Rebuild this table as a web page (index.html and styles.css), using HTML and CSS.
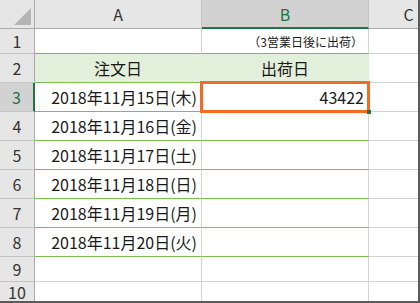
FILE: index.html
```html
<!DOCTYPE html>
<html lang="ja">
<head>
    <meta charset="UTF-8">
    <title>出荷日</title>
    <link rel="stylesheet" href="styles.css">
</head>
<body>
    <div class="sheet">
        <div class="grid">
            <!-- column headers -->
            <div class="corner"><span class="tri"></span></div>
            <div class="colhead">A</div>
            <div class="colhead sel">B</div>
            <div class="colhead">C</div>

            <div class="rowhead">1</div>
            <div class="cell gline"></div>
            <div class="cell gline note">（3営業日後に出荷）</div>
            <div class="cell"></div>

            <div class="rowhead">2</div>
            <div class="cell gline title fill">注文日</div>
            <div class="cell gline title fill">出荷日</div>
            <div class="cell"></div>

            <div class="rowhead sel">3</div>
            <div class="cell gline date">2018年11月15日(木)</div>
            <div class="cell gline date active">43422<span class="mark"></span><span class="handle"></span></div>
            <div class="cell"></div>

            <div class="rowhead">4</div>
            <div class="cell gline date">2018年11月16日(金)</div>
            <div class="cell gline"></div>
            <div class="cell"></div>

            <div class="rowhead">5</div>
            <div class="cell gline date">2018年11月17日(土)</div>
            <div class="cell gline"></div>
            <div class="cell"></div>

            <div class="rowhead">6</div>
            <div class="cell gline date">2018年11月18日(日)</div>
            <div class="cell gline"></div>
            <div class="cell"></div>

            <div class="rowhead">7</div>
            <div class="cell gline date">2018年11月19日(月)</div>
            <div class="cell gline"></div>
            <div class="cell"></div>

            <div class="rowhead">8</div>
            <div class="cell gline date">2018年11月20日(火)</div>
            <div class="cell gline"></div>
            <div class="cell"></div>

            <div class="rowhead">9</div>
            <div class="cell"></div>
            <div class="cell"></div>
            <div class="cell"></div>

            <div class="rowhead last">10</div>
            <div class="cell last"></div>
            <div class="cell last"></div>
            <div class="cell last"></div>
        </div>
    </div>
</body>
</html>
```

FILE: styles.css
```css
body {
    margin: 0;
    background-color: #fff;
    font-family: "Noto Sans CJK JP", "Noto Sans", sans-serif;
    color: #1a1a1a;
}
.sheet {
    width: 420px;
    height: 303px;
    box-sizing: border-box;
    border-right: 2px solid #5a5a5a;
    border-bottom: 2px solid #5a5a5a;
    overflow: hidden;
}
.grid {
    display: grid;
    grid-template-columns: 35px 167px 167px 80px;
    grid-template-rows: 29px 25px 29px 29px 29px 29px 29px 29px 29px 25px 20px;
}
.grid > div {
    box-sizing: border-box;
    border-right: 1px solid #d4d4d4;
    border-bottom: 1px solid #d4d4d4;
}
.grid > .last {
    border-bottom: none;
}
.corner {
    position: relative;
    background-color: #e6e6e6;
    border-right-color: #ababab !important;
    border-bottom-color: #ababab !important;
}
.tri {
    position: absolute;
    right: 3px;
    bottom: 3px;
    width: 0;
    height: 0;
    border-left: 17px solid transparent;
    border-bottom: 17px solid #b4b4b4;
}
.colhead {
    background-color: #e6e6e6;
    border-right-color: #c4c4c4 !important;
    border-bottom-color: #ababab !important;
    display: flex;
    align-items: center;
    justify-content: center;
    font-size: 16px;
    color: #333;
}
.colhead.sel {
    background-color: #d2d2d2;
    color: #217346;
    border-bottom: 2px solid #217346 !important;
}
.rowhead {
    background-color: #e6e6e6;
    border-right-color: #ababab !important;
    border-bottom-color: #c4c4c4 !important;
    display: flex;
    align-items: center;
    justify-content: center;
    font-size: 16px;
    line-height: 1;
    color: #333;
}
.rowhead.sel {
    background-color: #d2d2d2;
    color: #217346;
    border-right: 2px solid #217346 !important;
}
.cell {
    display: flex;
    align-items: center;
    justify-content: flex-end;
    padding: 0 4px;
    font-size: 16px;
    white-space: nowrap;
}
.gline {
    border-bottom-color: #80bb52 !important;
}
.fill {
    background-color: #e2efda;
    border-right-color: #e2efda !important;
}
.title {
    justify-content: center;
}
.note {
    font-size: 12px;
    padding-right: 5px;
}
.active {
    position: relative;
}
.mark {
    position: absolute;
    left: -2px;
    top: -2px;
    width: 170px;
    height: 32px;
    box-sizing: border-box;
    border: 3px solid #f26a24;
}
.handle {
    position: absolute;
    right: -3px;
    bottom: -3px;
    width: 4px;
    height: 4px;
    background-color: #217346;
}
```
